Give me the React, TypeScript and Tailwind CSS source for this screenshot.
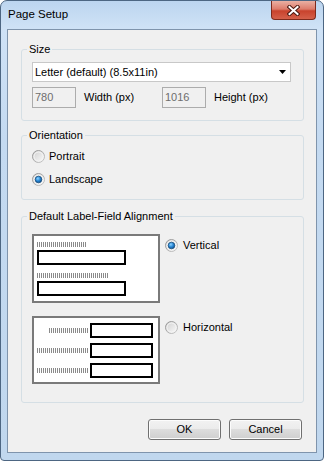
import React from 'react';

function Radio({ checked }: { checked?: boolean }) {
  return (
    <svg width="13" height="13" viewBox="0 0 13 13" className="shrink-0">
      <defs>
        <linearGradient id="rOuter" x1="0" y1="0" x2="1" y2="1">
          <stop offset="0" stopColor="#8f8f8f" />
          <stop offset="1" stopColor="#c8c8c8" />
        </linearGradient>
        <linearGradient id="rInner" x1="0" y1="0" x2="1" y2="1">
          <stop offset="0" stopColor="#cfcfcf" />
          <stop offset="1" stopColor="#fbfbfb" />
        </linearGradient>
        <radialGradient id="rDot" cx="0.4" cy="0.35" r="0.7">
          <stop offset="0" stopColor="#8fd3ff" />
          <stop offset="0.5" stopColor="#2a8ad8" />
          <stop offset="1" stopColor="#0b4a86" />
        </radialGradient>
      </defs>
      <circle cx="6.5" cy="6.5" r="6" fill="url(#rInner)" stroke="url(#rOuter)" strokeWidth="1" />
      <circle cx="6.5" cy="6.5" r="4.5" fill="none" stroke="#f4f4f4" strokeWidth="1" />
      {checked && <circle cx="6.5" cy="6.5" r="3.3" fill="url(#rDot)" stroke="#1b4f7e" strokeWidth="0.8" />}
    </svg>
  );
}

function Ticks({ w }: { w: string }) {
  return (
    <div
      className={`${w} h-[5px] bg-[repeating-linear-gradient(90deg,#8a8a8a_0px,#8a8a8a_1px,transparent_1px,transparent_2px)]`}
    />
  );
}

function Legend({ children }: { children: React.ReactNode }) {
  return <legend className="ml-[5px] px-[2px] leading-[14px]">{children}</legend>;
}

function Button({ children }: { children: React.ReactNode }) {
  return (
    <button className="w-[73px] h-[21px] rounded-[3px] border border-[#707070] bg-[linear-gradient(180deg,#f2f2f2_0%,#ebebeb_50%,#dddddd_50%,#cfcfcf_100%)] leading-[19px] text-center shadow-[inset_0_0_0_1px_#fcfcfc]">
      {children}
    </button>
  );
}

export default function App() {
  return (
    <div className="w-[324px] h-[461px] font-['Liberation_Sans',Arial,sans-serif] text-[11px] text-black">
      <div className="relative flex h-full flex-col rounded-t-[7px] rounded-b-[4px] border border-[#4d6682] bg-[linear-gradient(180deg,#bcd5ef_0%,#cfe2f6_6%,#c4daf1_30%,#c0d7ee_100%)] px-[6px] pb-[7px]">
        {/* title bar */}
        <div className="flex h-[28px] items-center pl-[1px] pb-[1px] text-[11.5px] text-black">Page Setup</div>
        <div className="absolute right-[7px] top-0 flex h-[19px] w-[45px] items-center justify-center rounded-b-[4px] border border-t-0 border-[#7d2a1c] bg-[linear-gradient(180deg,#eab0a3_0%,#dd7c6b_45%,#c8432d_55%,#d4604a_100%)]">
          <svg width="13" height="11" viewBox="0 0 13 11">
            <path d="M2.5 2 L10.5 9 M10.5 2 L2.5 9" stroke="#4a1810" strokeWidth="4" strokeLinecap="square" />
            <path d="M2.5 2 L10.5 9 M10.5 2 L2.5 9" stroke="#ffffff" strokeWidth="2" strokeLinecap="square" />
          </svg>
        </div>

        {/* client area */}
        <div className="flex flex-1 flex-col border border-[#7f94ac] bg-[#f0f0f0] pl-[13px] pr-[12px] pt-[12px]">
          {/* Size */}
          <fieldset className="h-[79px] rounded-[3px] border border-[#d5dfe5]">
            <Legend>Size</Legend>
            <div className="pl-[10px] pt-[6px]">
              <div className="flex h-[20px] w-[259px] items-center justify-between border border-[#c8c8c8] bg-white pl-[2px] pr-[4px]">
                <span>Letter (default) (8.5x11in)</span>
                <svg width="7" height="4" viewBox="0 0 7 4">
                  <path d="M0 0 H7 L3.5 4 Z" fill="#000" />
                </svg>
              </div>
              <div className="mt-[5px] flex h-[21px] items-center">
                <div className="flex h-[21px] w-[44px] items-center border border-[#acacac] bg-[#f0f0f0] pl-[2px] text-[#6d6d6d]">780</div>
                <span className="w-[86px] pl-[8px]">Width (px)</span>
                <div className="flex h-[21px] w-[44px] items-center border border-[#acacac] bg-[#f0f0f0] pl-[2px] text-[#6d6d6d]">1016</div>
                <span className="pl-[8px]">Height (px)</span>
              </div>
            </div>
          </fieldset>

          {/* Orientation */}
          <fieldset className="mt-[7px] h-[72px] rounded-[3px] border border-[#d5dfe5]">
            <Legend>Orientation</Legend>
            <div className="flex flex-col pl-[10px] pt-[3px]">
              <div className="flex h-[23px] items-center gap-[4px]">
                <Radio />
                <span>Portrait</span>
              </div>
              <div className="flex h-[23px] items-center gap-[4px]">
                <Radio checked />
                <span>Landscape</span>
              </div>
            </div>
          </fieldset>

          {/* Alignment */}
          <fieldset className="mt-[9px] h-[194px] rounded-[3px] border border-[#d5dfe5]">
            <Legend>Default Label-Field Alignment</Legend>
            <div className="flex flex-col pl-[10px] pt-[11px]">
              <div className="flex items-start">
                <div className="flex h-[69px] w-[128px] flex-col border-2 border-[#7a7a7a] bg-white pl-[3px] pt-[6px]">
                  <Ticks w="w-[50px]" />
                  <div className="mt-[3px] h-[15px] w-[89px] border-2 border-black" />
                  <div className="mt-[8px]">
                    <Ticks w="w-[72px]" />
                  </div>
                  <div className="mt-[3px] h-[15px] w-[89px] border-2 border-black" />
                </div>
                <div className="ml-[5px] mt-[3px] flex items-center gap-[5px]">
                  <Radio checked />
                  <span>Vertical</span>
                </div>
              </div>
              <div className="mt-[13px] flex items-start">
                <div className="flex h-[68px] w-[128px] flex-col gap-[5px] border-2 border-[#7a7a7a] bg-white pr-[5px] pt-[5px]">
                  {['w-[39px]', 'w-[51px]', 'w-[51px]'].map((w, i) => (
                    <div key={i} className="flex items-center justify-end gap-[2px]">
                      <Ticks w={w} />
                      <div className="h-[15px] w-[63px] border-2 border-black" />
                    </div>
                  ))}
                </div>
                <div className="ml-[5px] mt-[3px] flex items-center gap-[5px]">
                  <Radio />
                  <span>Horizontal</span>
                </div>
              </div>
            </div>
          </fieldset>

          {/* Buttons */}
          <div className="mt-[16px] flex justify-end gap-[8px] pr-[2px]">
            <Button>OK</Button>
            <Button>Cancel</Button>
          </div>
        </div>
      </div>
    </div>
  );
}
